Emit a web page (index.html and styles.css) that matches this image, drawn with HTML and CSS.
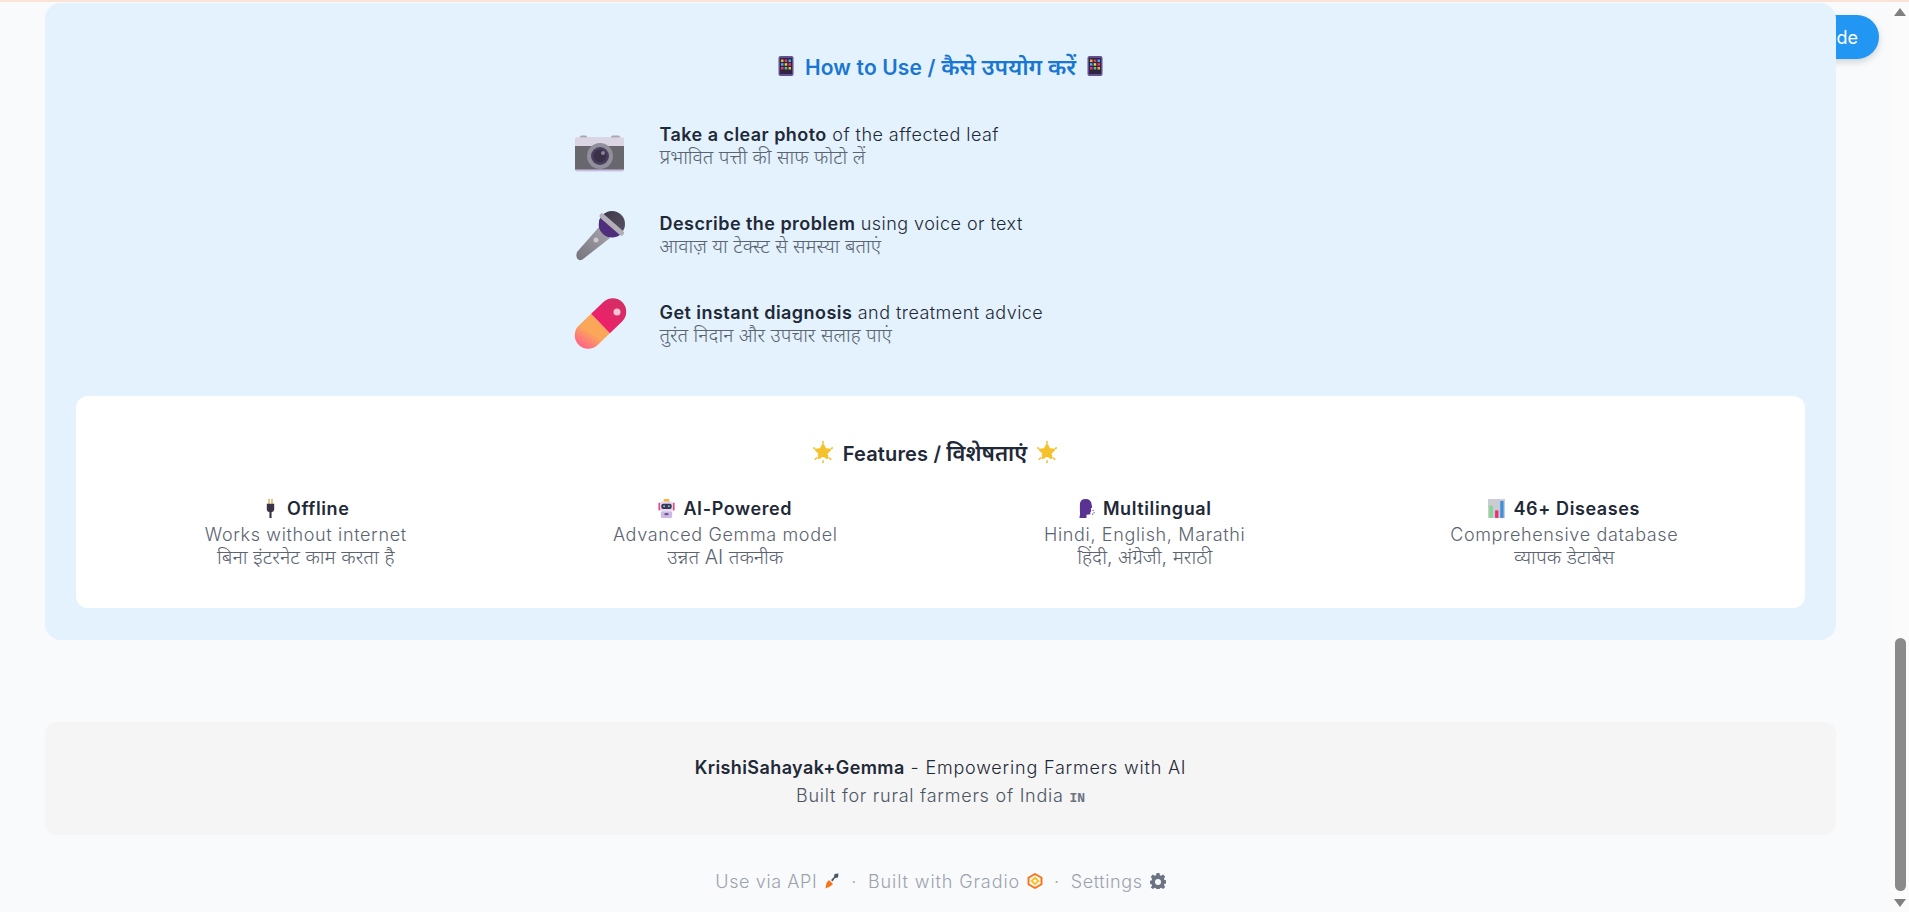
FILE: index.html
```html
<!DOCTYPE html>
<html lang="en">
<head>
<meta charset="utf-8">
<title>KrishiSahayak+Gemma</title>
<link rel="stylesheet" href="styles.css">
</head>
<body>
<div class="topline"></div>
<div class="app">
  <main class="content">
    <button class="mode-btn">Dark Mode</button>
    <section class="panel">
      <h2 class="title"><svg class="em20" viewBox="0 0 16 20"><use href="#phone"/></svg><span>How to Use / <span class="deva">कैसे उपयोग करें</span></span><svg class="em20" viewBox="0 0 16 20"><use href="#phone"/></svg></h2>
      <div class="steps">
        <div class="step">
          <svg class="step-icon" viewBox="0 0 52 52">
            <rect x="5" y="15.5" width="7" height="4" rx="1.5" fill="#a9a6ae"/><rect x="36" y="15.5" width="9" height="4" rx="1.5" fill="#a9a6ae"/>
            <rect x="0" y="17.5" width="49" height="34" rx="2.5" fill="#cdbfe3"/>
            <path d="M0 26V20a2.5 2.5 0 0 1 2.5-2.5h44A2.5 2.5 0 0 1 49 20v6z" fill="#dbd4e2"/>
            <rect x="0" y="26" width="49" height="23.5" fill="#69676e"/>
            <circle cx="25" cy="36" r="13" fill="#918f9b"/><circle cx="25" cy="36" r="9" fill="#4b3f5e"/><circle cx="25" cy="36" r="6.5" fill="#3a3048"/><circle cx="28" cy="33" r="2" fill="#8c8399"/>
          </svg>
          <p class="step-text"><b>Take a clear photo</b> of the affected leaf<br><span class="hi">प्रभावित पत्ती की साफ फोटो लें</span></p>
        </div>
        <div class="step">
          <svg class="step-icon" viewBox="0 0 52 52">
            <defs><linearGradient id="mh" x1="0" y1="1" x2="1" y2="0"><stop offset="0" stop-color="#77737c"/><stop offset="1" stop-color="#aaa6af"/></linearGradient><linearGradient id="mt" x1="0" y1="0" x2="1" y2="1"><stop offset="0" stop-color="#3b3444"/><stop offset="1" stop-color="#5c5568"/></linearGradient></defs>
            <path d="M2 43 24 18 35 29 7.500 50.500Q4.500 52 2.500 50 0.500 47 2 43z" fill="url(#mh)"/>
            <circle cx="37" cy="15" r="13" fill="url(#mt)"/>
            <path d="M27 6.500A13 13 0 0 0 47 24z" fill="#4f2f7c"/>
            <path d="M27 7 46.500 24" stroke="#b2aeb8" stroke-width="5" stroke-linecap="round"/>
            <circle cx="21" cy="31" r="2.500" fill="#cbc8d0"/>
          </svg>
          <p class="step-text"><b>Describe the problem</b> using voice or text<br><span class="hi">आवाज़ या टेक्स्ट से समस्या बताएं</span></p>
        </div>
        <div class="step">
          <svg class="step-icon" viewBox="0 0 52 52">
            <defs><linearGradient id="po" x1="1" y1="0" x2="0" y2="0.200"><stop offset="0.500" stop-color="#fba75a"/><stop offset="1" stop-color="#ff6b82"/></linearGradient><linearGradient id="pr" x1="0" y1="0" x2="1" y2="0"><stop offset="0" stop-color="#ee2068"/><stop offset="1" stop-color="#d22f66"/></linearGradient></defs>
            <g transform="translate(25.500 25.500) rotate(-44)">
              <path d="M0-13.500H-17a13.500 13.500 0 0 0 0 27H0z" fill="url(#po)"/>
              <path d="M0-13.500H17a13.500 13.500 0 0 1 0 27H0z" fill="url(#pr)"/>
            </g>
            <circle cx="42" cy="14" r="3.500" fill="#ffc3d3"/>
          </svg>
          <p class="step-text"><b>Get instant diagnosis</b> and treatment advice<br><span class="hi">तुरंत निदान और उपचार सलाह पाएं</span></p>
        </div>
      </div>
      <div class="card">
        <h3 class="card-title"><svg class="em22" viewBox="0 0 20 20"><use href="#star"/></svg><span>Features / <span class="deva">विशेषताएं</span></span><svg class="em22" viewBox="0 0 20 20"><use href="#star"/></svg></h3>
        <div class="features">
          <div class="feature">
            <h4 class="f-name"><svg class="em16" viewBox="0 0 16 18"><path d="M6 0h1.200v5H6zM8.800 0H10v5H8.800z" fill="#d9a441"/><path d="M4.500 4.500h7v5.500q0 2-2.500 2.500V18H7v-5.500Q4.500 12 4.500 10z" fill="#3a3346"/></svg>Offline</h4>
            <p class="f-en">Works without internet</p><p class="f-hi">बिना इंटरनेट काम करता है</p>
          </div>
          <div class="feature">
            <h4 class="f-name"><svg class="em16" viewBox="0 0 18 20"><rect x="6" y="0" width="6" height="3" fill="#f4b63a"/><rect x="0.500" y="4" width="2" height="8" fill="#e8396f"/><rect x="15.500" y="4" width="2" height="8" fill="#e8396f"/><rect x="2" y="2.500" width="14" height="10" rx="3" fill="#e6d5ee"/><rect x="3.500" y="5" width="11" height="5.500" rx="2" fill="#3a3550"/><circle cx="6.500" cy="7.700" r="1.100" fill="#63c8f2"/><circle cx="11.500" cy="7.700" r="1.100" fill="#63c8f2"/><rect x="3" y="13" width="12" height="7" rx="1.500" fill="#cdb8e6"/><rect x="7" y="15" width="4" height="2" fill="#5d4f78"/></svg>AI-Powered</h4>
            <p class="f-en">Advanced Gemma model</p><p class="f-hi">उन्नत AI तकनीक</p>
          </div>
          <div class="feature">
            <h4 class="f-name"><svg class="em16" viewBox="0 0 18 20"><path d="M2 6Q2 0 8 0q6 0 6.500 6l.500 3-1.500 1 .500 3-1 1 .200 2-4.200.500V20H1.500q1-4 .500-7Q2 9 2 6z" fill="#5a3392"/><circle cx="16" cy="12" r=".8" fill="#6b7a9b"/><circle cx="17" cy="14.500" r=".8" fill="#6b7a9b"/><circle cx="15.500" cy="16" r=".8" fill="#6b7a9b"/></svg>Multilingual</h4>
            <p class="f-en">Hindi, English, Marathi</p><p class="f-hi">हिंदी, अंग्रेजी, मराठी</p>
          </div>
          <div class="feature">
            <h4 class="f-name"><svg class="em16" viewBox="0 0 18 20"><rect width="18" height="20" fill="#c9ccd2"/><rect x="1.500" y="7" width="3.500" height="13" fill="#7fd88b"/><rect x="7.500" y="12" width="3.500" height="8" fill="#ec2f73"/><rect x="13" y="2" width="3.500" height="18" fill="#3f8fdc"/></svg>46+ Diseases</h4>
            <p class="f-en">Comprehensive database</p><p class="f-hi">व्यापक डेटाबेस</p>
          </div>
        </div>
      </div>
    </section>
    <section class="credit">
      <p class="credit-main"><b>KrishiSahayak+Gemma</b> - Empowering Farmers with AI</p>
      <p class="credit-sub">Built for rural farmers of India <span class="flag">IN</span></p>
    </section>
    <footer class="gradio">
      <a class="g-link">Use via API <svg class="g-icon" viewBox="0 0 16 16"><path d="M1.500 15.500 2.500 10l2.500-3 4 4-3 2.500z" fill="#f97316"/><path d="M7 7l3-3 .5-3 4-.5-.5 4-3 .5-2.500 3.500z" fill="#4b5563"/></svg></a>
      <span class="dot">·</span>
      <a class="g-link g-wide">Built with Gradio <svg class="g-icon" viewBox="0 0 16 16"><path d="M8 1 14.500 4.700V11.300L8 15 1.500 11.300V4.700z" fill="none" stroke="#f97316" stroke-width="1.900"/><path d="M8 4.800 11.300 8 8 11.200 4.700 8z" fill="none" stroke="#fbbf24" stroke-width="1.900"/></svg></a>
      <span class="dot">·</span>
      <a class="g-link">Settings <svg class="g-icon" viewBox="0 0 16 16"><path fill="#6b7280" fill-rule="evenodd" d="M6.500 0h3l.4 2.200 1.300.6L13.100 1.500l2.100 2.200-1.300 1.900.6 1.300 2.100.4v3l-2.100.4-.6 1.300 1.300 1.900-2.100 2.100-1.900-1.300-1.300.6-.4 1.700h-3l-.4-1.700-1.300-.6-1.900 1.300L.8 14.400l1.300-1.900-.6-1.300L0 10.800v-3l1.500-.4.600-1.300L.8 3.700l2.100-2.200 1.900 1.300 1.300-.6zM8 6a3 3 0 1 0 0 6 3 3 0 0 0 0-6z"/></svg></a>
    </footer>
  </main>
  <aside class="scrollbar">
    <span class="arrow-up"></span>
    <span class="thumb"></span>
    <span class="arrow-down"></span>
  </aside>
</div>
<svg class="sprite" aria-hidden="true">
  <symbol id="phone" viewBox="0 0 16 20"><rect x="0.500" width="15" height="20" rx="2" fill="#62508f"/><rect x="2" y="2" width="12" height="16" fill="#2f2444"/><g><rect x="3" y="3.500" width="2.500" height="2.500" fill="#f2b13a"/><rect x="6.700" y="3.500" width="2.500" height="2.500" fill="#e8396f"/><rect x="10.500" y="3.500" width="2.500" height="2.500" fill="#45b0e6"/><rect x="3" y="7.200" width="2.500" height="2.500" fill="#45b0e6"/><rect x="6.700" y="7.200" width="2.500" height="2.500" fill="#f2d03a"/><rect x="10.500" y="7.200" width="2.500" height="2.500" fill="#e8396f"/><rect x="3" y="11" width="2.500" height="2.500" fill="#e8396f"/><rect x="6.700" y="11" width="2.500" height="2.500" fill="#55c47a"/><rect x="10.500" y="11" width="2.500" height="2.500" fill="#f2b13a"/></g></symbol>
  <symbol id="star" viewBox="0 0 20 20"><path d="M10 3.500l2 3.800 4.400.7-3.200 3 .8 4.400L10 13.300l-4 2.100.8-4.400-3.200-3 4.400-.7z" fill="#f5c22e" stroke="#f5c22e" stroke-width="2" stroke-linejoin="round"/><path d="M10 0v2.500M10 17.500V20M1 6l2 1M19 6l-2 1M2.500 17l2-2M17.500 17l-2-2" stroke="#f0bd3b" stroke-width="1.400"/></symbol>
</svg>
</body>
</html>
```

FILE: styles.css
```css
* { box-sizing: border-box; }
html, body { margin: 0; height: 100%; overflow: hidden; }
body {
  background: #f9fafc;
  color: #1f2937;
  font-family: Inter, "Noto Sans", "Noto Sans Devanagari", "Liberation Sans", sans-serif;
  display: flex;
  flex-direction: column;
}
.topline { height: 2px; background: #fbe3d8; flex: none; }
.app { flex: 1; display: flex; min-height: 0; }
.content {
  flex: 1;
  position: relative;
  padding: 1px 55px 0 45px;
  display: flex;
  flex-direction: column;
}
.mode-btn {
  position: absolute;
  top: 13px;
  right: 12px;
  height: 44px;
  padding: 0 21px;
  border: 0;
  border-radius: 22px;
  background: #2196f3;
  color: #fff;
  font: 400 18px Inter, sans-serif;
  box-shadow: 0 3px 7px rgba(0,0,0,.16);
}
.panel {
  position: relative;
  height: 637px;
  background: #e3f2fd;
  border-radius: 16px;
  padding: 48px 31px 32px;
}
.title, .card-title {
  display: flex;
  justify-content: center;
  align-items: center;
  gap: 9px;
  margin: 0;
  height: 30px;
  font-size: 21px;
  font-weight: 600;
  letter-spacing: .15px;
}
.deva { font-size: 22.800px; letter-spacing: 0; }
.title { color: #1976d2; margin-bottom: 39px; }
.em20 { width: 20px; height: 20px; flex: none; }
.em22 { width: 22px; height: 22px; flex: none; }
.steps { width: 732px; margin: 0 auto; display: flex; flex-direction: column; gap: 37px; }
.step { display: flex; align-items: center; gap: 33px; height: 52px; }
.step-icon { width: 52px; height: 52px; flex: none; overflow: visible; }
.step-text { margin: -1px 0 0; font-size: 18px; line-height: 23px; font-weight: 300; letter-spacing: .45px; }
.step-text b { font-weight: 600; }
.hi { color: #5b6471; font-size: 19.500px; letter-spacing: 0; }
.card {
  margin-top: 46px;
  height: 212px;
  background: #fff;
  border-radius: 12px;
  padding: 41px 39px 0 28px;
}
.card-title { font-size: 20px; }
.card-title .deva { font-size: 22px; }
.features { display: grid; grid-template-columns: repeat(4, 1fr); gap: 16px; margin-top: 28px; text-align: center; }
.feature p { margin: 0; line-height: 23px; font-weight: 300; color: #5b6471; }
.feature .f-en { font-size: 18px; letter-spacing: .65px; }
.feature .f-hi { font-size: 19.800px; }
.f-name {
  margin: 0 0 2px;
  height: 26px;
  font-size: 18px;
  font-weight: 600;
  letter-spacing: .6px;
  display: flex;
  justify-content: center;
  align-items: center;
  gap: 8px;
}
.em16 { width: 17px; height: 19px; flex: none; }
.credit {
  margin-top: 82px;
  height: 113px;
  background: #f5f5f5;
  border-radius: 12px;
  padding: 33px 0 0;
  text-align: center;
}
.credit p { margin: 0; }
.credit-main { font-size: 18px; line-height: 26px; font-weight: 300; letter-spacing: .8px; }
.credit-main b { font-weight: 600; letter-spacing: .4px; }
.credit .credit-sub { margin-top: 2px; font-size: 18px; line-height: 26px; font-weight: 300; letter-spacing: .75px; color: #4b5563; }
.flag { font-family: "Liberation Mono", monospace; font-size: 13px; font-weight: 700; letter-spacing: 0; color: #6b7280; }
.gradio {
  margin-top: 33px;
  display: flex;
  justify-content: center;
  align-items: center;
  gap: 11px;
  height: 26px;
  font-size: 18px;
  font-weight: 300;
  letter-spacing: .6px;
  color: #9ca3af;
}
.g-link { display: inline-flex; align-items: center; gap: 7px; }
.g-wide { letter-spacing: .9px; }
.g-icon { width: 16px; height: 16px; }
.scrollbar {
  width: 18px;
  flex: none;
  background: #fbfbfb;
  display: flex;
  flex-direction: column;
  align-items: center;
}
.arrow-up, .arrow-down { width: 0; height: 0; border-left: 6.500px solid transparent; border-right: 6.500px solid transparent; }
.arrow-up { border-bottom: 8px solid #808080; margin-top: 6px; }
.arrow-down { border-top: 8px solid #808080; margin-top: 8px; }
.thumb { width: 11px; height: 253px; margin-top: 622px; border-radius: 6px; background: #8a8a8a; }
.sprite { position: absolute; width: 0; height: 0; }
```
